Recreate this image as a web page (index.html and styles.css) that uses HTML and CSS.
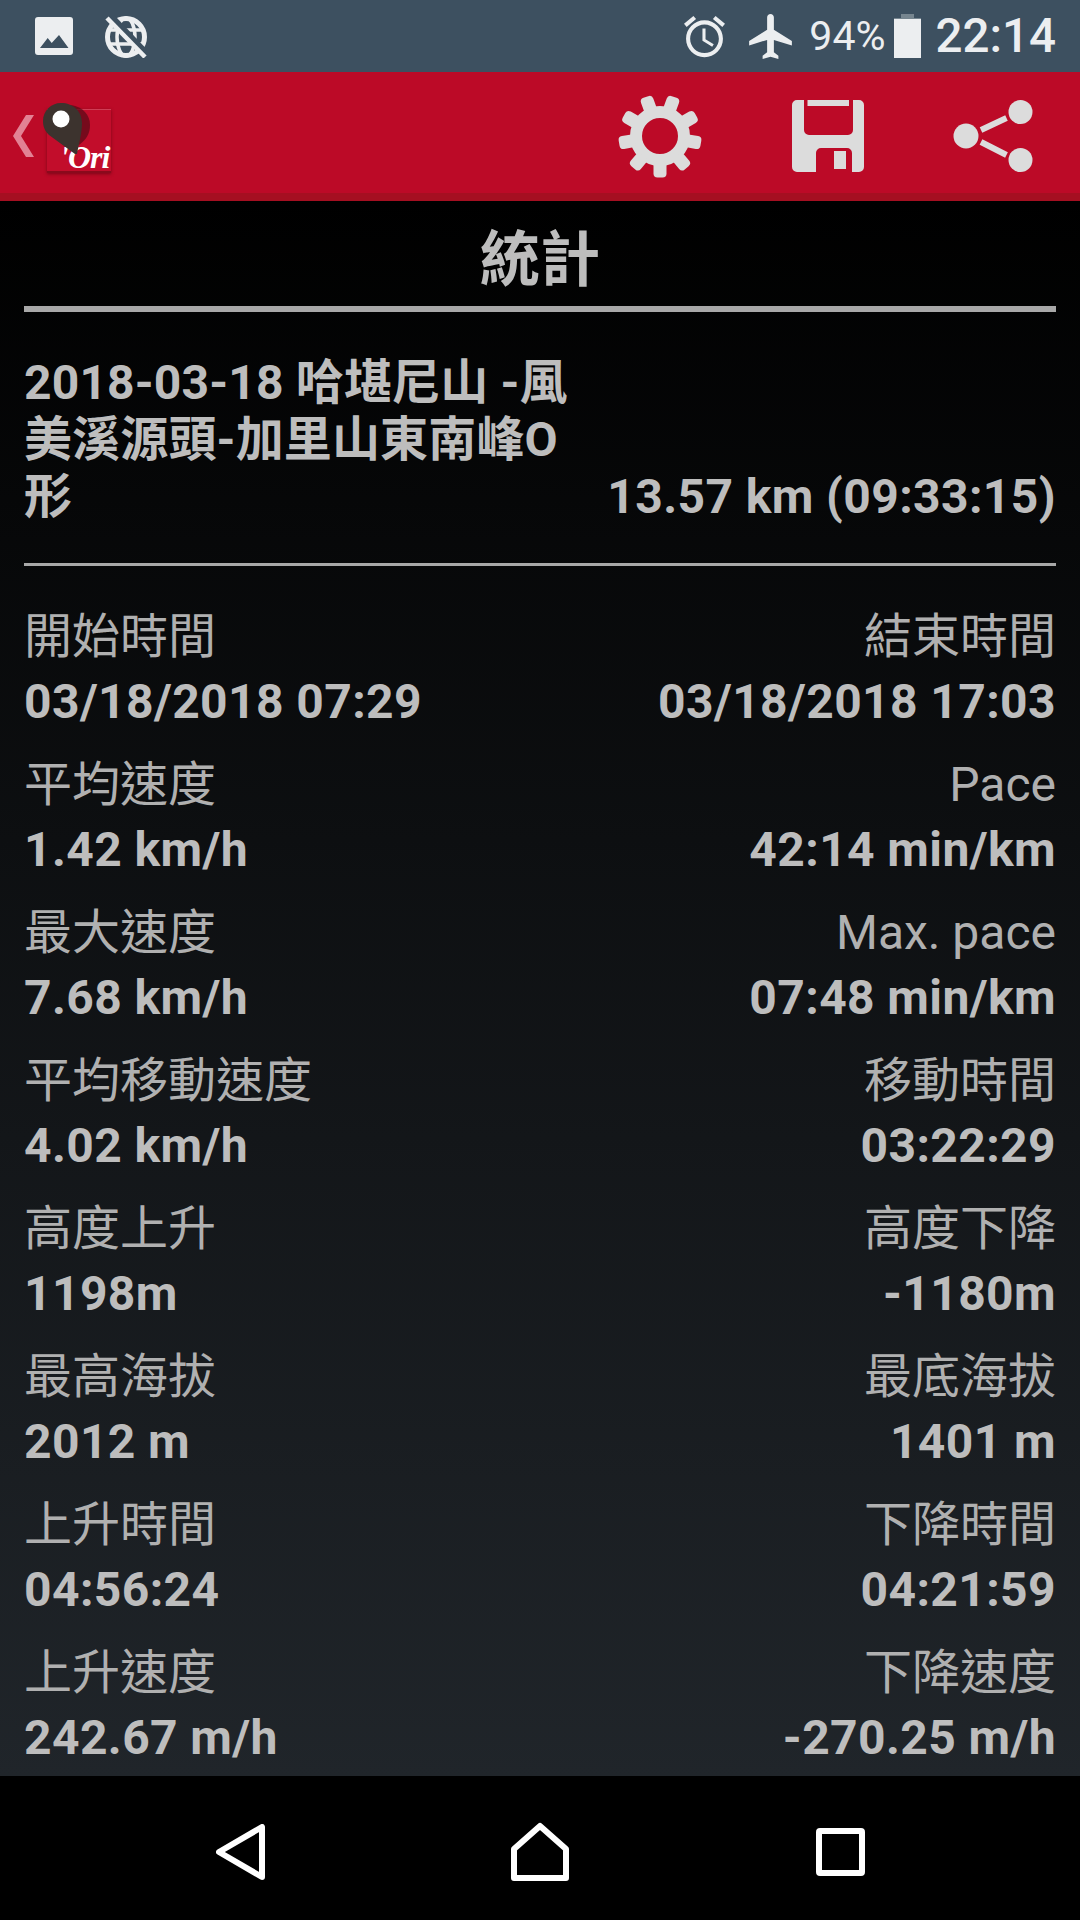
FILE: index.html
```html
<!DOCTYPE html>
<html lang="zh-Hant">
<head>
    <meta charset="UTF-8">
    <meta name="viewport" content="width=device-width, initial-scale=1.0">
    <title>統計</title>
    <link rel="stylesheet" href="styles.css">
</head>
<body>
    <!-- Status bar -->
    <div class="statusbar">
        <div class="status-left">
            <svg class="ic-image" viewBox="0 0 38 38"><path fill="#eceef0" fill-rule="evenodd" d="M3 0h32a3 3 0 0 1 3 3v32a3 3 0 0 1-3 3H3a3 3 0 0 1-3-3V3a3 3 0 0 1 3-3zM5 31h28.500L24 18l-7.300 8-4-5z"/></svg>
            <svg class="ic-globe" viewBox="0 0 42 43" fill="none" stroke="#eceef0">
                <circle cx="21" cy="22" r="18.500" stroke-width="5"/>
                <ellipse cx="21" cy="22" rx="9" ry="19" stroke-width="3.500"/>
                <path d="M3 15h36M3 29h36" stroke-width="3.500"/>
                <path d="M5 0l38 40" stroke="#3d5060" stroke-width="6"/>
                <path d="M2 3l38 39" stroke-width="4.500"/>
            </svg>
        </div>
        <div class="status-right">
            <svg class="ic-alarm" viewBox="2 1.800 20 20.200"><path fill="#eceef0" d="M22 5.720l-4.600-3.860-1.290 1.530 4.600 3.860L22 5.720zM7.880 3.390L6.600 1.860 2 5.710l1.290 1.530 4.590-3.850zM12.500 8H11v6l4.750 2.850.75-1.230-4-2.370V8zM12 4c-4.970 0-9 4.030-9 9s4.030 9 9 9 9-4.030 9-9-4.030-9-9-9zm0 16c-3.870 0-7-3.130-7-7s3.130-7 7-7 7 3.130 7 7-3.130 7-7 7z"/></svg>
            <svg class="ic-plane" viewBox="2 2 19 20"><path fill="#eceef0" d="M21 16v-2l-8-5V3.500c0-.83-.67-1.500-1.500-1.500S10 2.670 10 3.500V9l-8 5v2l8-2.500V19l-2 1.500V22l3.500-1 3.500 1v-1.500L13 19v-5.500l8 2.500z"/></svg>
            <span class="battery-pct">94%</span>
            <svg class="ic-battery" viewBox="0 0 27 44"><path fill="#76858f" d="M7 0h13v4h7v5H0V4h7z"/><rect y="5" width="27" height="39" fill="#eceef0"/></svg>
            <span class="clock">22:14</span>
        </div>
    </div>

    <!-- Toolbar -->
    <div class="toolbar">
        <div class="toolbar-left">
            <svg class="ic-chevron" viewBox="0 0 21 42"><path fill="#e28294" d="M21 0L8 21l13 21h-8L0 21 13 0z"/></svg>
            <div class="logo">
                <span class="logo-text">'Ori</span>
                <svg class="logo-pin" viewBox="0 0 50 56">
                    <path fill="#5c0a18" opacity="0.75" d="M28 2c12 2 19 10 19 20 0 8-3 14-11 20z"/>
                    <path fill="#3c332e" d="M18 0C8 0 0 8 0 18c0 6 2 10 6 14l26 19 2 0c2-11 5-21 5-31C39 8 30 0 18 0z"/>
                    <circle cx="18" cy="16" r="8.500" fill="#fff"/>
                </svg>
            </div>
        </div>
        <div class="toolbar-right">
            <svg class="ic-gear" viewBox="-42 -42 84 84" fill="#dcdcdc">
                <circle r="24" fill="none" stroke="#dcdcdc" stroke-width="12"/>
                <rect x="-6.500" y="-41.500" width="13" height="16" rx="4" transform="rotate(20)"/>
                <rect x="-6.500" y="-41.500" width="13" height="16" rx="4" transform="rotate(60)"/>
                <rect x="-6.500" y="-41.500" width="13" height="16" rx="4" transform="rotate(100)"/>
                <rect x="-6.500" y="-41.500" width="13" height="16" rx="4" transform="rotate(140)"/>
                <rect x="-6.500" y="-41.500" width="13" height="16" rx="4" transform="rotate(180)"/>
                <rect x="-6.500" y="-41.500" width="13" height="16" rx="4" transform="rotate(220)"/>
                <rect x="-6.500" y="-41.500" width="13" height="16" rx="4" transform="rotate(260)"/>
                <rect x="-6.500" y="-41.500" width="13" height="16" rx="4" transform="rotate(300)"/>
                <rect x="-6.500" y="-41.500" width="13" height="16" rx="4" transform="rotate(340)"/>
            </svg>
            <svg class="ic-save" viewBox="0 0 72 72"><path fill="#dcdcdc" fill-rule="evenodd" d="M5 0h62a5 5 0 0 1 5 5v62a5 5 0 0 1-5 5H5a5 5 0 0 1-5-5V5a5 5 0 0 1 5-5zM12 0v30a5 5 0 0 0 5 5h39a5 5 0 0 0 5-5V0h-4v6H15.500V0zM24 72h36V53a5 5 0 0 0-5-5H29a5 5 0 0 0-5 5zM42 51h12v18H42z"/></svg>
            <svg class="ic-share" viewBox="0 0 80 72">
                <path d="M28 30l25.500-12M28 42l25.500 13" stroke="#dcdcdc" stroke-width="6"/>
                <circle cx="13" cy="36" r="12.500" fill="#dcdcdc"/>
                <circle cx="67.500" cy="12" r="12" fill="#dcdcdc"/>
                <circle cx="67.500" cy="60" r="12" fill="#dcdcdc"/>
            </svg>
        </div>
    </div>

    <!-- Stats -->
    <div class="content">
        <h1 class="page-title">統計</h1>

        <div class="track">
            <div class="track-name">2018-03-18 哈堪尼山 -風美溪源頭-加里山東南峰O形</div>
            <div class="track-total">13.57 km (09:33:15)</div>
        </div>

        <div class="stats">
            <div class="stat"><span class="label">開始時間</span><span class="value">03/18/2018 07:29</span></div>
            <div class="stat right"><span class="label">結束時間</span><span class="value">03/18/2018 17:03</span></div>

            <div class="stat"><span class="label">平均速度</span><span class="value">1.42 km/h</span></div>
            <div class="stat right"><span class="label">Pace</span><span class="value">42:14 min/km</span></div>

            <div class="stat"><span class="label">最大速度</span><span class="value">7.68 km/h</span></div>
            <div class="stat right"><span class="label">Max. pace</span><span class="value">07:48 min/km</span></div>

            <div class="stat"><span class="label">平均移動速度</span><span class="value">4.02 km/h</span></div>
            <div class="stat right"><span class="label">移動時間</span><span class="value">03:22:29</span></div>

            <div class="stat"><span class="label">高度上升</span><span class="value">1198m</span></div>
            <div class="stat right"><span class="label">高度下降</span><span class="value">-1180m</span></div>

            <div class="stat"><span class="label">最高海拔</span><span class="value">2012 m</span></div>
            <div class="stat right"><span class="label">最底海拔</span><span class="value">1401 m</span></div>

            <div class="stat"><span class="label">上升時間</span><span class="value">04:56:24</span></div>
            <div class="stat right"><span class="label">下降時間</span><span class="value">04:21:59</span></div>

            <div class="stat"><span class="label">上升速度</span><span class="value">242.67 m/h</span></div>
            <div class="stat right"><span class="label">下降速度</span><span class="value">-270.25 m/h</span></div>
        </div>
    </div>

    <!-- Navigation bar -->
    <div class="navbar">
        <svg class="ic-back" viewBox="0 0 49 56"><path fill="none" stroke="#fff" stroke-width="6" stroke-linejoin="round" d="M46 3v50L3 28z"/></svg>
        <svg class="ic-home" viewBox="0 0 58 59"><path fill="none" stroke="#fff" stroke-width="6" stroke-linejoin="round" d="M29 4L3 27v29h52V27z"/></svg>
        <svg class="ic-recent" viewBox="0 0 49 48"><rect x="3" y="3" width="43" height="42" rx="1" fill="none" stroke="#fff" stroke-width="6"/></svg>
    </div>
</body>
</html>
```

FILE: styles.css
```css
* {
    margin: 0;
    padding: 0;
    box-sizing: border-box;
}

body {
    width: 1080px;
    height: 1920px;
    overflow: hidden;
    background: #000;
    font-family: Roboto, 'Noto Sans CJK TC', sans-serif;
    display: flex;
    flex-direction: column;
}

svg {
    display: block;
    flex-shrink: 0;
}

/* Status bar */
.statusbar {
    height: 72px;
    background: #3d5060;
    color: #eceef0;
    display: flex;
    justify-content: space-between;
    align-items: center;
    padding: 0 24px 0 35px;
}

.status-left,
.status-right {
    display: flex;
    align-items: center;
}

.ic-image {
    width: 38px;
    height: 38px;
}

.ic-globe {
    width: 42px;
    height: 43px;
    margin-left: 32px;
}

.ic-alarm {
    width: 41px;
    height: 43px;
}

.ic-plane {
    width: 43px;
    height: 45px;
    margin-left: 24px;
}

.battery-pct {
    font-size: 41px;
    margin-left: 17px;
}

.ic-battery {
    width: 27px;
    height: 44px;
    margin-left: 9px;
}

.clock {
    font-size: 47.5px;
    font-weight: 500;
    margin-left: 14px;
}

/* Toolbar */
.toolbar {
    height: 129px;
    background: #bc0a27;
    border-bottom: 8px solid #a50f21;
    display: flex;
    justify-content: space-between;
    align-items: center;
    padding: 0 47px 0 13px;
}

.toolbar-left,
.toolbar-right {
    display: flex;
    align-items: center;
}

.toolbar-right {
    margin-top: 7px;
}

.ic-chevron {
    width: 21px;
    height: 42px;
    margin-top: 7px;
}

.logo {
    position: relative;
    width: 64px;
    height: 64px;
    margin-left: 13px;
    margin-top: 16px;
    background: #c20d2b;
    border-top: 1px solid #cf3d55;
    border-bottom: 2px solid #8a0a1c;
    box-shadow: 0 1px 3px rgba(60, 0, 10, 0.5);
}

.logo-text {
    position: absolute;
    left: 13px;
    bottom: -6px;
    color: #fff;
    font-family: 'Liberation Serif', serif;
    font-style: italic;
    font-weight: bold;
    font-size: 32px;
    letter-spacing: -1px;
    line-height: 40px;
    white-space: nowrap;
}

.logo-pin {
    position: absolute;
    left: -4px;
    top: -7px;
    width: 50px;
    height: 56px;
}

.ic-gear {
    width: 84px;
    height: 84px;
}

.ic-save {
    width: 72px;
    height: 72px;
    margin-left: 90px;
}

.ic-share {
    width: 80px;
    height: 72px;
    margin-left: 89px;
}

/* Stats */
.content {
    height: 1575px;
    padding: 0 24px;
    color: #bdbdbd;
    background: linear-gradient(#000, #20252a);
}

.page-title {
    height: 111px;
    border-bottom: 6px solid #a8a8a8;
    font-size: 60px;
    font-weight: bold;
    line-height: 120px;
    text-align: center;
}

.track {
    height: 254px;
    padding-top: 42px;
    border-bottom: 3px solid #a8a8a8;
    display: flex;
    justify-content: space-between;
    align-items: flex-start;
    font-size: 48px;
    font-weight: bold;
}

.track-name {
    width: 560px;
    line-height: 57px;
    letter-spacing: 0.15px;
}

.track-total {
    line-height: 57px;
    margin-top: 114px;
    letter-spacing: 0.4px;
}

.stats {
    display: grid;
    grid-template-columns: 1fr 1fr;
    grid-auto-rows: 148px;
    padding-top: 37px;
}

.stat {
    display: flex;
    flex-direction: column;
}

.stat.right {
    align-items: flex-end;
}

.label {
    font-size: 48px;
    line-height: 68px;
    color: #b0b0b0;
}

.value {
    font-size: 48px;
    font-weight: bold;
    letter-spacing: 0.4px;
    line-height: 62px;
}

/* Navigation bar */
.navbar {
    flex: 1;
    background: #000;
    display: flex;
    align-items: center;
    padding-left: 216px;
    padding-top: 7px;
}

.ic-back {
    width: 49px;
    height: 56px;
}

.ic-home {
    width: 58px;
    height: 59px;
    margin-left: 246px;
}

.ic-recent {
    width: 49px;
    height: 48px;
    margin-left: 247px;
}
```
